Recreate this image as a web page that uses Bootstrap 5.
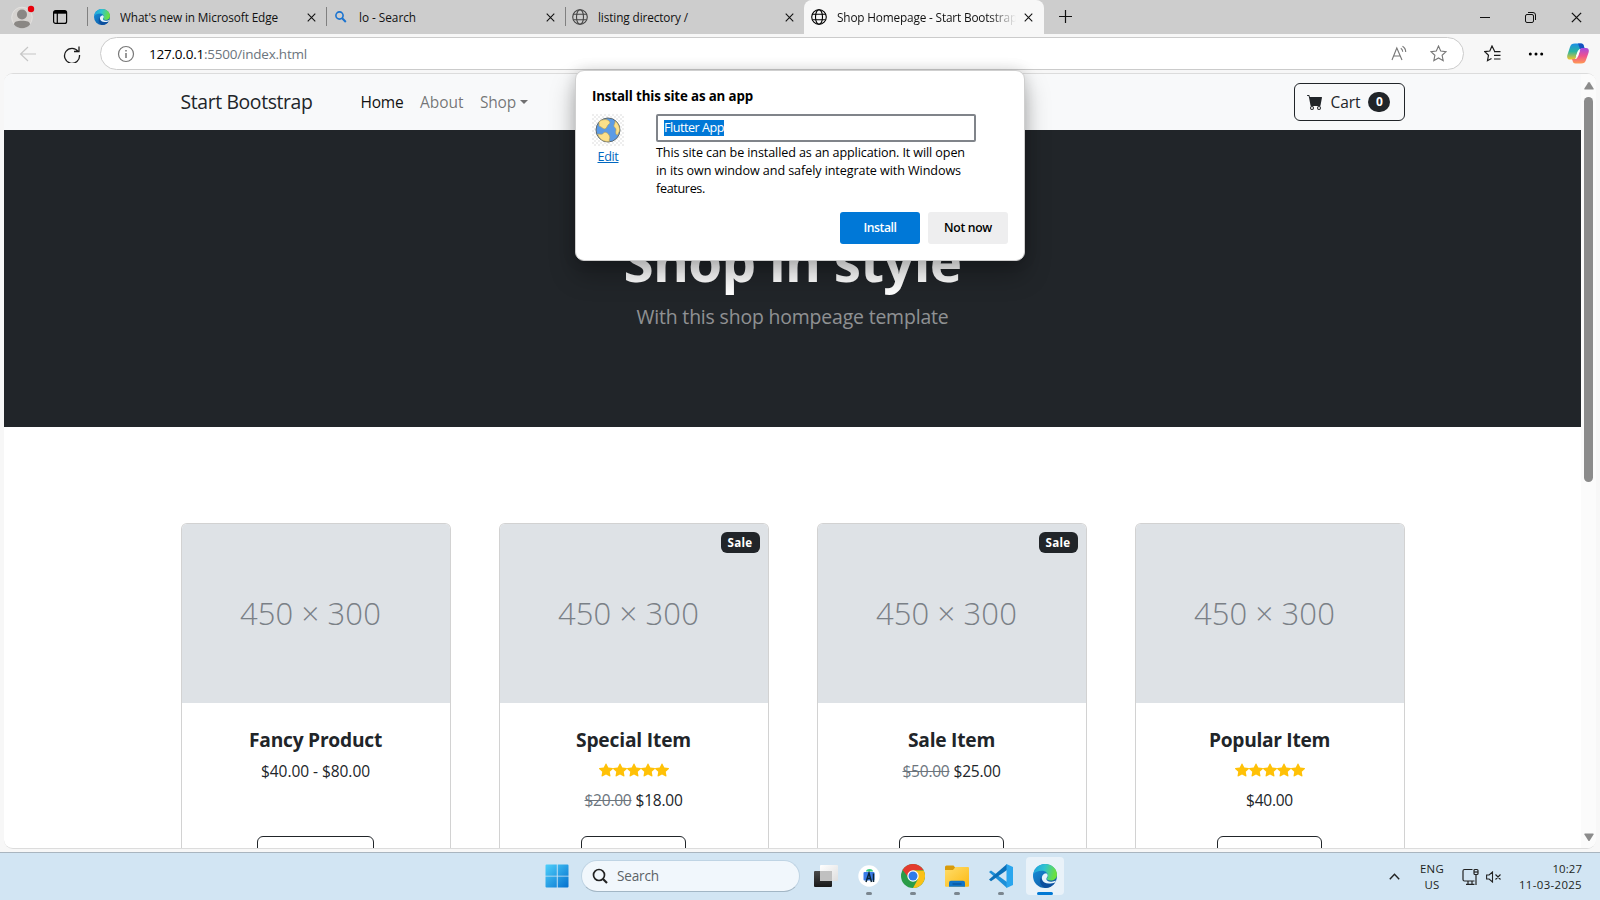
<!DOCTYPE html>
<html lang="en">
<head>
<meta charset="utf-8">
<meta name="viewport" content="width=device-width, initial-scale=1">
<title>Shop Homepage - Start Bootstrap Template</title>
<link href="https://cdn.jsdelivr.net/npm/bootstrap@5.3.0/dist/css/bootstrap.min.css" rel="stylesheet">
<style>
  body { font-family: "Open Sans", "Noto Sans", sans-serif; height: 900px; overflow: hidden; background: #f7f7f7; color: #212529; font-size: 15.5px; line-height: 24px; }
  svg { display: block; flex: none; }
  .fit { display: inline-block; white-space: nowrap; }

  /* browser chrome */
  .tabstrip { height: 34px; background: #cdcdcd; color: #111; font-size: 11.8px; line-height: 16px; }
  .tab-left { width: 87px; padding-left: 11px; }
  .tab-item { width: 239px; padding: 0 10px 0 7px; position: relative; }
  .tab-item::before { content: ""; width: 1px; height: 19px; background: #808080; position: absolute; left: 0; top: 7px; }
  .tab-item.current { width: 240px; background: #f7f7f7; border-radius: 8px 8px 0 0; padding-right: 11px; }
  .tab-item.current::before { display: none; }
  .tab-title { overflow: hidden; white-space: nowrap; margin-left: 10px; }
  .current .tab-title { -webkit-mask-image: linear-gradient(90deg, #000 85%, transparent 100%); mask-image: linear-gradient(90deg, #000 85%, transparent 100%); }
  .toolbar { height: 39px; background: #f7f7f7; }
  .address { width: 1364px; height: 33px; border: 1px solid #cbcbcb; border-radius: 17px; background: #fff; font-size: 13.5px; margin-left: 19px; }
  .viewport { margin: 0 4px; height: 776px; border: 1px solid #dcdcdc; border-width: 1px 0; border-radius: 9px; overflow: hidden; background: #fff; }
  .page { width: 1577px; height: 774px; overflow: hidden; }
  .scroller { width: 15px; background: #fbfbfb; padding: 8px 0 7px; }
  .thumb { width: 9px; height: 385px; border-radius: 5px; background: #8b8b8b; margin-top: 7px; }

  /* shop page */
  .shop-nav { --bs-navbar-brand-font-size: 19.4px; height: 56px; }
  .shop-nav .navbar-brand { line-height: 30px; margin-right: 40px; color: #212529; }
  .shop-nav .nav-link { color: rgba(0,0,0,.55); }
  .shop-nav .nav-link.active { color: #111; }
  .shop-nav .nav-item + .nav-item { margin-left: .5px; }
  .cart-btn { height: 38px; width: 111px; --bs-btn-font-size: 15.5px; --bs-btn-line-height: 24px; }
  .count-badge { font-size: 12px; line-height: 12px; padding: 4px 7.5px; margin-top: 1px; }
  .hero h1 { font-size: 54.8px; line-height: 67.2px; padding-top: 1px; margin-bottom: 7px; }
  .hero .lead { font-size: 19.4px; line-height: 30px; font-weight: 400; padding-top: .5px; margin-bottom: -.5px; }
  .card { --bs-card-border-color: rgba(0,0,0,.176); }
  .thumb-img { height: 178.67px; background: #dee2e6; color: #7a8086; font-weight: 300; font-size: 31px; border-radius: 5px 5px 0 0; padding: 0 10px 2px 0; }
  .card h5 { font-size: 19.2px; line-height: 24px; padding-top: 1px; margin-bottom: 7px; }
  .stars { height: 21px; padding-top: 4px; }
  .sale { top: 8px; right: 8px; font-size: 11.6px; line-height: 12px; padding: 4.700px 7px 4.300px; }
  .price { height: 24px; }

  /* install dialog */
  .install { left: 575px; top: 70px; width: 450px; height: 191px; background: #fff; border: 1px solid #cfcfcf; border-radius: 9px; box-shadow: 0 14px 26px rgba(0,0,0,.28), 0 0 14px rgba(0,0,0,.14); padding: 15px 16px; color: #000; z-index: 10; font-size: 12.6px; line-height: 18px; }
  .install h6 { font-size: 13.3px; line-height: 20px; }
  .site-icon { width: 32px; text-align: center; margin-right: 32px; }
  .name-box { width: 320px; height: 28px; border: 2px solid #80848a; border-radius: 2px; padding: 3px 6px; }
  .name-box span { background: #0078d7; color: #fff; line-height: 16px; display: inline-block; }
  .dlg-btn { width: 80px; height: 32px; border-radius: 3px; font-size: 12.2px; font-weight: 600; }

  /* taskbar */
  .taskbar { margin-top: 3px; height: 48px; background: #d2e5f3; border-top: 1px solid #a9b5bf; color: #1c1f22; font-size: 11.4px; line-height: 16px; padding-left: 537px; }
  .app { width: 38px; height: 38px; margin: 4px 3px 0; border-radius: 4px; position: relative; }
  .app.active { background: #e9f2f9; }
  .app.running::after { content: ""; position: absolute; left: 16px; bottom: 0; width: 6px; height: 3px; border-radius: 2px; background: #7b868f; }
  .app.active::after { left: 11px; width: 16px; background: #0078d4; }
  .search { width: 219px; height: 32px; border-radius: 16px; background: #f1f7fc; border: 1px solid #bfd4e4; border-bottom-color: #a2b6c5; margin: 7px 4px 0 2.5px; padding-left: 10px; font-size: 13.6px; color: #5d6367; }
</style>
</head>
<body>
<svg width="0" height="0" class="position-absolute">
  <defs>
    <linearGradient id="eg1" x1="0" y1="0" x2="1" y2="0.2"><stop offset="0" stop-color="#1d9fe0"/><stop offset=".5" stop-color="#2fc3d0"/><stop offset="1" stop-color="#6be03e"/></linearGradient>
    <linearGradient id="eg2" x1="0" y1="0" x2="1" y2="1"><stop offset="0" stop-color="#1795e0"/><stop offset="1" stop-color="#0d4b96"/></linearGradient>
    <linearGradient id="win" x1="0" y1="0" x2="1" y2="1"><stop offset="0" stop-color="#4ed0fb"/><stop offset="1" stop-color="#0470ce"/></linearGradient>
    <linearGradient id="fold" x1="0" y1="0" x2="1" y2="1"><stop offset="0" stop-color="#ffdd6b"/><stop offset="1" stop-color="#fcb912"/></linearGradient>
    <linearGradient id="cpa" x1="0" y1="0" x2="0" y2="1"><stop offset="0" stop-color="#1b8fe8"/><stop offset=".5" stop-color="#2bb5a0"/><stop offset="1" stop-color="#f5c52a"/></linearGradient>
    <linearGradient id="cpb" x1="0" y1="0" x2="0" y2="1"><stop offset="0" stop-color="#a24be0"/><stop offset=".5" stop-color="#ee5090"/><stop offset="1" stop-color="#ff9a52"/></linearGradient>
    <linearGradient id="tvw" x1="0" y1="0" x2="1" y2="1"><stop offset="0" stop-color="#fff"/><stop offset="1" stop-color="#dedede"/></linearGradient>
    <linearGradient id="tvd" x1="0" y1="0" x2="0" y2="1"><stop offset="0" stop-color="#4a4a4a"/><stop offset="1" stop-color="#181818"/></linearGradient>
    <symbol id="edge" viewBox="0 0 24 24">
      <circle cx="12" cy="12" r="12" fill="url(#eg2)"/>
      <path d="M.3 10C1.500 3.600 6.500 0 12 0c7 0 12 5 12 10.500 0 4-3 6-6.200 6-2.600 0-4-.9-4-1.700 0-.7 1-1.100 1-3C14.800 9 12.500 6.800 9 6.800 5 6.800 1.600 8.500.3 10z" fill="url(#eg1)"/>
      <path d="M8.300 12.600c0 6 6 9 13.700 6-2 3.200-5.500 5.400-9.500 5.400C8 22.500 5.500 18 8.300 12.600z" fill="#0c4f9e"/>
      <path d="M13.200 9.300c-3 .2-5 3-4.100 6.200 1 3.700 6.500 5.600 13.200 2.700l.6-1.600c-1.600.9-3.200 1.200-5 1.100-3-.1-4.600-1.400-4.500-3 .1-1.100 1.300-1.400 1.300-3.100 0-.9-.6-1.900-1.500-2.300z" fill="#e6f3fb"/>
    </symbol>
    <symbol id="globe" viewBox="0 0 16 16"><g fill="none" stroke="currentColor" stroke-width="1.1"><circle cx="8" cy="8" r="7.300"/><ellipse cx="8" cy="8" rx="3.500" ry="7.300"/><path d="M1.400 5.300h13.200M1.400 10.700h13.200"/></g></symbol>
    <symbol id="cross" viewBox="0 0 10 10"><path d="M.8.8l8.400 8.400M9.200.8L.8 9.200" stroke="#111" stroke-width="1.200"/></symbol>
    <symbol id="star" viewBox="0 0 16 16"><path fill="#ffc107" d="M3.612 15.443c-.386.198-.824-.149-.746-.592l.83-4.730L.173 6.765c-.329-.314-.158-.888.283-.950l4.898-.696L7.538.792c.197-.390.730-.390.927 0l2.184 4.327 4.898.696c.441.062.612.636.282.950l-3.522 3.356.830 4.730c.078.443-.360.790-.746.592L8 13.187l-4.389 2.256z"/></symbol>
  </defs>
</svg>

<!-- tab strip -->
<div class="tabstrip d-flex">
  <div class="tab-left d-flex align-items-center">
    <svg width="24" height="26" viewBox="0 0 24 26"><circle cx="11" cy="13.500" r="10.300" fill="#d6d3d0" stroke="#e4e2e0"/><circle cx="11" cy="10.500" r="5" fill="#8a8784"/><path d="M3 20.500c0-3 3-3.800 8-3.800s8 .8 8 3.800c-2 2.500-5 3.700-8 3.700s-6-1.200-8-3.700z" fill="#8a8784"/><circle cx="20" cy="5" r="3.200" fill="#e8000b"/></svg>
    <svg class="ms-3" width="18" height="16" viewBox="0 0 18 16"><rect x="2.600" y="1.600" width="13" height="12.800" rx="2" fill="none" stroke="#000" stroke-width="1.200"/><path d="M3 3.300h12.200" stroke="#000" stroke-width="2.800"/><path d="M6.300 4v10" stroke="#000" stroke-width="1.200"/></svg>
  </div>
  <div class="tab-item d-flex align-items-center">
    <svg width="16" height="16"><use href="#edge"/></svg>
    <div class="tab-title flex-fill"><span class="fit" data-w="158">What's new in Microsoft Edge</span></div>
    <svg width="9" height="9"><use href="#cross"/></svg>
  </div>
  <div class="tab-item d-flex align-items-center">
    <svg width="16" height="16" viewBox="0 0 16 16"><circle cx="6.500" cy="6.500" r="3.600" fill="none" stroke="#1a73d0" stroke-width="1.600"/><path d="M9.200 9.200l3.600 3.800" stroke="#1a73d0" stroke-width="2"/></svg>
    <div class="tab-title flex-fill"><span class="fit" data-w="57">lo - Search</span></div>
    <svg width="9" height="9"><use href="#cross"/></svg>
  </div>
  <div class="tab-item d-flex align-items-center">
    <svg width="16" height="16" color="#444"><use href="#globe"/></svg>
    <div class="tab-title flex-fill"><span class="fit" data-w="90">listing directory /</span></div>
    <svg width="9" height="9"><use href="#cross"/></svg>
  </div>
  <div class="tab-item current d-flex align-items-center">
    <svg width="16" height="16" color="#000"><use href="#globe"/></svg>
    <div class="tab-title flex-fill me-2"><span class="fit" data-w="180">Shop Homepage - Start Bootstrap</span></div>
    <svg width="9" height="9"><use href="#cross"/></svg>
  </div>
  <svg class="mt-2" style="margin-left:15px" width="13" height="17" viewBox="0 0 13 17"><path d="M6.500 2v13M0 8.500h13" stroke="#111" stroke-width="1.200"/></svg>
  <div class="d-flex align-items-center ms-auto" style="gap:35px;padding-right:18px">
    <svg width="10" height="10"><path d="M0 5.500h10" stroke="#111"/></svg>
    <svg width="11" height="11" viewBox="0 0 11 11" fill="none" stroke="#111"><rect x=".5" y="2.500" width="8" height="8" rx="1.500"/><path d="M3 .5h5a2.500 2.500 0 0 1 2.500 2.500v5"/></svg>
    <svg width="11" height="11" viewBox="0 0 10 10"><use href="#cross"/></svg>
  </div>
</div>

<!-- toolbar -->
<div class="toolbar d-flex align-items-center">
  <svg class="ms-3" width="20" height="18" viewBox="0 0 20 18" fill="none" stroke="#c6c6c6" stroke-width="1.200"><path d="M20 9H5M12 2L4.600 9l7.400 7"/></svg>
  <svg class="ms-4" width="21" height="18" viewBox="0 0 21 18" fill="none" stroke="#1b1b1b" stroke-width="1.300"><path d="M18.200 6.500A7.500 7.500 0 1 0 19.500 10M19 1.500v5h-5"/></svg>
  <div class="address d-flex align-items-center">
    <svg class="ms-3" width="18" height="18" viewBox="0 0 18 18"><circle cx="9" cy="9" r="7.500" fill="none" stroke="#777" stroke-width="1.200"/><path d="M9 8v5M9 5v1.500" stroke="#777" stroke-width="1.500"/></svg>
    <span class="fit" style="margin-left:14px" data-w="158"><span class="text-black">127.0.0.1</span><span class="text-secondary">:5500/index.html</span></span>
    <svg class="ms-auto" width="17" height="17" viewBox="0 0 17 17" fill="none" stroke="#777" stroke-width="1.100"><path d="M1 15L5.800 3 11 15M2.700 11h6.800M9.800 3.200c1.300.8 1.900 2 1.900 3.600M11.500 1.200c2 1.200 3.200 3.300 3.200 5.800"/></svg>
    <svg class="me-3" style="margin-left:22px" width="17" height="17" viewBox="0 0 17 17" fill="none" stroke="#777" stroke-width="1.100"><path d="M8.500 1l2.200 5 5.400.6-4 3.700 1.100 5.400-4.700-2.700-4.700 2.700 1.100-5.400-4-3.700L6.300 6z"/></svg>
  </div>
  <svg style="margin-left:20px" width="17" height="17" viewBox="0 0 17 17" fill="none" stroke="#1b1b1b" stroke-width="1.200"><path d="M10.500 6L8 1 5.800 6 .8 6.600l3.700 3.700-1 5.400 4-2.300M10 6.600h6.500M10 10.300h6.500M10 14h6.500"/></svg>
  <svg style="margin-left:27px" width="16" height="4" viewBox="0 0 16 4"><circle cx="2.300" cy="2" r="1.500"/><circle cx="8" cy="2" r="1.500"/><circle cx="13.700" cy="2" r="1.500"/></svg>
  <svg style="margin-left:23px" width="22" height="21" viewBox="0 0 22 21"><path d="M8 .5h6c2 0 2.500 1.200 3 3l.5 2h-3c-2 0-2.800.8-3.400 2.800L9 14c-.6 2-1.300 2.500-3 2.500H3C.5 16.500-.3 14.500.4 12L3 4C3.800 1.500 5 .5 8 .5z" fill="url(#cpa)"/><path d="M11 .5h3c2 0 2.500 1.200 3 3l.5 2h-3L13 6z" fill="#1552c0"/><path d="M14 20.500H8.500c-2 0-2.500-1.200-3-3L5 16h2.500c2 0 2.800-.8 3.400-2.800L13 7c.6-2 1.300-2 3-2h3c2.500 0 3.300 2 2.600 4.500L19 17c-.8 2.500-2 3.500-5 3.500z" fill="url(#cpb)"/><path d="M11 7.500h2l-2 6H8.800z" fill="#fff"/></svg>
</div>

<!-- page viewport -->
<div class="viewport d-flex">
  <div class="page">
    <nav class="navbar navbar-expand-lg navbar-light bg-light shop-nav">
      <div class="container px-4 px-lg-5">
        <a class="navbar-brand" href="#"><span class="fit" data-w="132">Start Bootstrap</span></a>
        <ul class="navbar-nav me-auto">
          <li class="nav-item"><a class="nav-link active" href="#"><span class="fit" data-w="43">Home</span></a></li>
          <li class="nav-item"><a class="nav-link" href="#"><span class="fit" data-w="43.5">About</span></a></li>
          <li class="nav-item"><a class="nav-link dropdown-toggle" href="#"><span class="fit" data-w="36">Shop</span></a></li>
        </ul>
        <button class="btn btn-outline-dark cart-btn d-flex align-items-center" type="button">
          <svg class="me-2" width="16" height="16" viewBox="0 0 16 16" fill="currentColor"><path d="M0 1.500A.5.500 0 0 1 .5 1H2a.5.500 0 0 1 .485.379L2.890 3H14.500a.5.500 0 0 1 .491.592l-1.500 8A.5.500 0 0 1 13 12H4a.5.500 0 0 1-.491-.408L2.010 3.607 1.610 2H.5a.5.500 0 0 1-.5-.5zM5 12a2 2 0 1 0 0 4 2 2 0 0 0 0-4zm7 0a2 2 0 1 0 0 4 2 2 0 0 0 0-4zm-7 1a1 1 0 1 1 0 2 1 1 0 0 1 0-2zm7 0a1 1 0 1 1 0 2 1 1 0 0 1 0-2z"/></svg>
          <span class="fit" data-w="30">Cart</span>
          <span class="badge bg-dark text-white rounded-pill count-badge ms-2">0</span>
        </button>
      </div>
    </nav>
    <header class="bg-dark py-5 hero">
      <div class="container px-4 px-lg-5 my-5 text-center text-white">
        <h1 class="fw-bold"><span class="fit" data-w="338">Shop in style</span></h1>
        <p class="lead text-white-50"><span class="fit" data-w="312">With this shop hompeage template</span></p>
      </div>
    </header>
    <section class="py-5">
      <div class="container px-4 px-lg-5 mt-5">
        <div class="row gx-5 row-cols-4 justify-content-center">
          <div class="col mb-5"><div class="card h-100">
            <div class="thumb-img d-flex align-items-center justify-content-center"><span class="fit" data-w="141">450 × 300</span></div>
            <div class="card-body p-4 text-center">
              <h5 class="fw-bold"><span class="fit" data-w="133">Fancy Product</span></h5>
              <div class="price"><span class="fit" data-w="109">$40.00 - $80.00</span></div>
            </div>
            <div class="card-footer p-4 pt-0 border-top-0 bg-transparent text-center"><a class="btn btn-outline-dark" style="width:117px" href="#">View options</a></div>
          </div></div>
          <div class="col mb-5"><div class="card h-100">
            <div class="badge bg-dark text-white position-absolute sale"><span class="fit" data-w="25">Sale</span></div>
            <div class="thumb-img d-flex align-items-center justify-content-center"><span class="fit" data-w="141">450 × 300</span></div>
            <div class="card-body p-4 text-center">
              <h5 class="fw-bold"><span class="fit" data-w="115">Special Item</span></h5>
              <div class="d-flex justify-content-center stars mb-2">
                <svg width="14" height="14"><use href="#star"/></svg><svg width="14" height="14"><use href="#star"/></svg><svg width="14" height="14"><use href="#star"/></svg><svg width="14" height="14"><use href="#star"/></svg><svg width="14" height="14"><use href="#star"/></svg>
              </div>
              <div class="price"><span class="fit text-secondary text-decoration-line-through" data-w="47">$20.00</span> <span class="fit" data-w="47">$18.00</span></div>
            </div>
            <div class="card-footer p-4 pt-0 border-top-0 bg-transparent text-center"><a class="btn btn-outline-dark" style="width:105px" href="#">Add to cart</a></div>
          </div></div>
          <div class="col mb-5"><div class="card h-100">
            <div class="badge bg-dark text-white position-absolute sale"><span class="fit" data-w="25">Sale</span></div>
            <div class="thumb-img d-flex align-items-center justify-content-center"><span class="fit" data-w="141">450 × 300</span></div>
            <div class="card-body p-4 text-center">
              <h5 class="fw-bold"><span class="fit" data-w="87">Sale Item</span></h5>
              <div class="price"><span class="fit text-secondary text-decoration-line-through" data-w="47">$50.00</span> <span class="fit" data-w="47">$25.00</span></div>
            </div>
            <div class="card-footer p-4 pt-0 border-top-0 bg-transparent text-center"><a class="btn btn-outline-dark" style="width:105px" href="#">Add to cart</a></div>
          </div></div>
          <div class="col mb-5"><div class="card h-100">
            <div class="thumb-img d-flex align-items-center justify-content-center"><span class="fit" data-w="141">450 × 300</span></div>
            <div class="card-body p-4 text-center">
              <h5 class="fw-bold"><span class="fit" data-w="121">Popular Item</span></h5>
              <div class="d-flex justify-content-center stars mb-2">
                <svg width="14" height="14"><use href="#star"/></svg><svg width="14" height="14"><use href="#star"/></svg><svg width="14" height="14"><use href="#star"/></svg><svg width="14" height="14"><use href="#star"/></svg><svg width="14" height="14"><use href="#star"/></svg>
              </div>
              <div class="price"><span class="fit" data-w="47">$40.00</span></div>
            </div>
            <div class="card-footer p-4 pt-0 border-top-0 bg-transparent text-center"><a class="btn btn-outline-dark" style="width:105px" href="#">Add to cart</a></div>
          </div></div>
        </div>
      </div>
    </section>
  </div>
  <div class="scroller d-flex flex-column align-items-center">
    <svg width="10" height="8" viewBox="0 0 10 8"><path d="M4.200.6a1 1 0 0 1 1.600 0L9.600 6.500q.4 1-.6 1H1q-1 0-.6-1z" fill="#8b8b8b"/></svg>
    <div class="thumb"></div>
    <svg class="mt-auto" width="10" height="8" viewBox="0 0 10 8"><path d="M4.200 7.400a1 1 0 0 0 1.600 0L9.600 1.500q.4-1-.6-1H1q-1 0-.6 1z" fill="#8b8b8b"/></svg>
  </div>
</div>

<!-- taskbar -->
<div class="taskbar d-flex">
  <div class="app d-flex align-items-center justify-content-center" style="margin-left:.5px"><svg width="24" height="24" viewBox="0 0 24 24"><path d="M1.500.5h10.300v11.200H.5V1.500q0-1 1-1zM12.700.5h9.800q1 0 1 1v10.200H12.700zM.5 12.500h11.300v11H1.500q-1 0-1-1zM12.700 12.500h10.800v10q0 1-1 1h-9.800z" fill="url(#win)"/></svg></div>
  <div class="search d-flex align-items-center">
    <svg width="16" height="16" viewBox="0 0 16 16" fill="none" stroke="#222" stroke-width="1.700"><circle cx="7" cy="7" r="5.500"/><path d="M11 11l4 4" stroke-width="2.200"/></svg>
    <span class="fit" style="margin-left:9px" data-w="42">Search</span>
  </div>
  <div class="app d-flex align-items-center justify-content-center me-0"><svg width="24" height="24" viewBox="0 0 24 24"><rect y="7" width="18" height="16" rx="1" fill="url(#tvd)"/><rect x="6" y="1" width="18" height="16" rx="1" fill="url(#tvw)"/><rect x="6" y="7" width="12" height="10" fill="#c0c0c0"/></svg></div>
  <div class="app running d-flex align-items-center justify-content-center" style="margin-left:5px"><svg width="24" height="24" viewBox="0 0 24 24"><circle cx="12" cy="12" r="10.700" fill="#fff"/><path d="M9 7.500a3.500 2.500 0 0 1 7 0z" fill="#3ecb82"/><rect x="6.500" y="8" width="11" height="8.500" rx="1" fill="#3a7be8"/><path d="M9 18l3-9 2.500 9M10 14.500h4M16.500 9.500V18" fill="none" stroke="#0b2536" stroke-width="1.500"/></svg></div>
  <div class="app running d-flex align-items-center justify-content-center"><svg width="24" height="24" viewBox="0 0 24 24"><circle cx="12" cy="12" r="12" fill="#2a9c47"/><path d="M1.600 6A12 12 0 0 1 22.400 6L12 6.500 8 14z" fill="#e33b2e"/><path d="M12 6.500h10.700A12 12 0 0 1 12 24l5-9z" fill="#fbc116"/><circle cx="12" cy="12" r="5.700" fill="#fff"/><circle cx="12" cy="12" r="4.500" fill="#2f7bea"/></svg></div>
  <div class="app running d-flex align-items-center justify-content-center"><svg width="24" height="24" viewBox="0 0 24 24"><path d="M0 3q0-1.500 1.500-1.500h7L10.500 4v3H0z" fill="#d89b0a"/><path d="M0 6h8l2.500-3H23q1 0 1 1v18q0 .8-1 .8H1q-1 0-1-.8z" fill="url(#fold)"/><path d="M4 22.800v-4q0-2 2-2h12q2 0 2 2v4z" fill="#1074c8"/><path d="M7.500 20h9" stroke="#0a4f94" stroke-width="1.200"/></svg></div>
  <div class="app running d-flex align-items-center justify-content-center"><svg width="24" height="24" viewBox="0 0 24 24"><path d="M0 8l2-1.600L18 18v6z" fill="#1d8fd8"/><path d="M0 15.500l2 1.800L18 6V0z" fill="#0a6fb8"/><path d="M17.500 0L24 3v18l-6.500 3z" fill="#2aa6ee"/></svg></div>
  <div class="app running active d-flex align-items-center justify-content-center"><svg width="24" height="24"><use href="#edge"/></svg></div>
  <div class="d-flex ms-auto align-items-center" style="padding-right:18px">
    <svg width="11" height="7" viewBox="0 0 11 7"><path d="M.8 6.200L5.500 1.300l4.700 4.900" fill="none" stroke="#222" stroke-width="1.400"/></svg>
    <div class="text-center" style="margin-left:20px"><span class="fit" data-w="24">ENG</span><br><span class="fit" data-w="15">US</span></div>
    <svg style="margin-left:18px" width="17" height="18" viewBox="0 0 17 18" fill="none" stroke="#222" stroke-width="1.200"><path d="M10.500 1.500H2.500Q1 1.500 1 3v8.500Q1 13 2.500 13h10M6 13v3M10 13v3M4 16.400h8.500M14 7v10"/><rect x="12" y="1.500" width="4" height="5" rx="1"/><path d="M12 4h4"/></svg>
    <svg style="margin-left:7px" width="16" height="12" viewBox="0 0 16 12" fill="none" stroke="#222" stroke-width="1.100"><path d="M.6 4v4h2.500L6.500 11V1L3.100 4zM9.500 3.500l5 5M14.500 3.500l-5 5"/></svg>
    <div class="text-end" style="margin-left:17px"><span class="fit" data-w="29.5">10:27</span><br><span class="fit" data-w="63">11-03-2025</span></div>
  </div>
</div>

<!-- install prompt -->
<div class="install position-absolute">
  <h6 class="fw-bold mb-2"><span class="fit" data-w="161">Install this site as an app</span></h6>
  <div class="d-flex">
    <div class="site-icon">
      <svg width="32" height="32" viewBox="0 0 32 32"><defs><pattern id="chk" width="4" height="4" patternUnits="userSpaceOnUse"><rect width="4" height="4" fill="#fff"/><path d="M0 0h2v2H0zM2 2h2v2H2z" fill="#eee"/></pattern></defs><rect width="32" height="32" fill="url(#chk)"/><circle cx="16" cy="16" r="12" fill="#5b9be6" stroke="#5f6a70"/><path d="M7 8c3-3 8-3 10-1 2 2 0 3-1 4s-1 3-3 4c-2 0-3-2-6-3zM23 7c3 2 5 6 4.500 10l-2 4c-2 0-2-3-1.500-5s-3-3-2-5 1-2 1-4zM5.500 20c3 0 5 1 6-1s5 0 6 3-1 3 0 5.500c-6 .5-10-2-12-7.500z" fill="#fbe08a" stroke="#b59a50" stroke-width=".6"/></svg>
      <a href="#" class="d-block" style="color:#0067c0;margin-top:2px"><span class="fit text-decoration-underline" data-w="21">Edit</span></a>
    </div>
    <div>
      <div class="name-box d-flex align-items-center"><span class="fit" data-w="60">Flutter App</span></div>
      <div style="margin-top:2px"><span class="fit" data-w="309">This site can be installed as an application. It will open</span><br><span class="fit" data-w="305">in its own window and safely integrate with Windows</span><br><span class="fit" data-w="49">features.</span></div>
    </div>
  </div>
  <div class="d-flex justify-content-end gap-2" style="margin-top:14px">
    <button class="dlg-btn border-0 text-white" style="background:#0078d7"><span class="fit" data-w="33">Install</span></button>
    <button class="dlg-btn border-0" style="background:#eeeeef"><span class="fit" data-w="48">Not now</span></button>
  </div>
</div>

<script src="https://cdn.jsdelivr.net/npm/bootstrap@5.3.0/dist/js/bootstrap.bundle.min.js"></script>
<script>
  document.querySelectorAll('[data-w]').forEach(function (el) {
    var gap = (parseFloat(el.dataset.w) - el.getBoundingClientRect().width) / el.textContent.length;
    el.style.letterSpacing = gap.toFixed(3) + 'px';
  });
</script>
</body>
</html>
